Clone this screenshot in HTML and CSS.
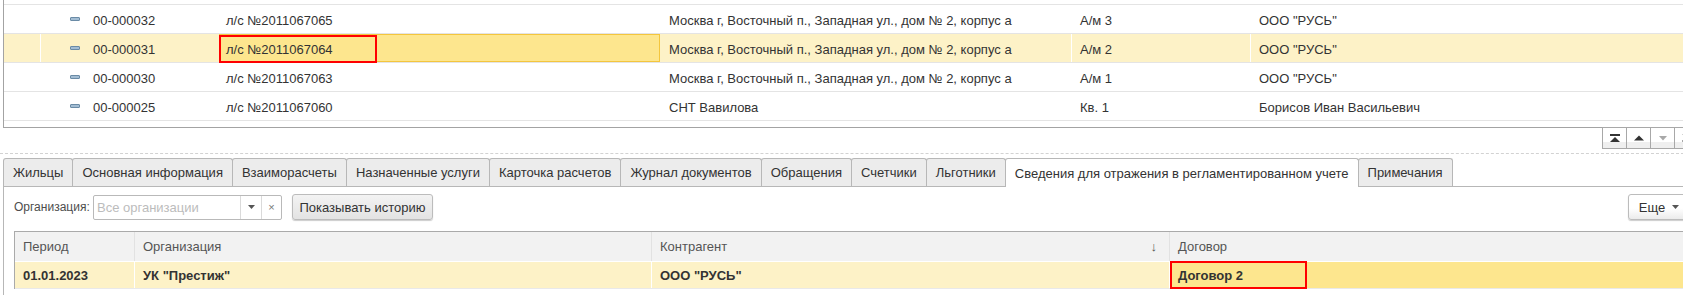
FILE: index.html
```html
<!DOCTYPE html>
<html lang="ru">
<head>
  <meta charset="UTF-8" />
  <title>Лицевые счета</title>
  <link rel="stylesheet" href="styles.css">
</head>
<body>
<div class="page">

  <!-- Список лицевых счетов -->
  <div class="list">
    <div class="rows">
      <div class="row">
        <div class="cell c-mark"></div>
        <div class="cell c-code"><span class="ico"></span>00-000032</div>
        <div class="cell c-acc">л/с №2011067065</div>
        <div class="cell c-addr">Москва г, Восточный п., Западная ул., дом № 2, корпус а</div>
        <div class="cell c-room">А/м 3</div>
        <div class="cell c-owner">ООО "РУСЬ"</div>
      </div>
      <div class="row current">
        <div class="cell c-mark"></div>
        <div class="cell c-code"><span class="ico"></span>00-000031</div>
        <div class="cell c-acc active"><span class="redbox acc-box"></span>л/с №2011067064</div>
        <div class="cell c-addr">Москва г, Восточный п., Западная ул., дом № 2, корпус а</div>
        <div class="cell c-room">А/м 2</div>
        <div class="cell c-owner">ООО "РУСЬ"</div>
      </div>
      <div class="row">
        <div class="cell c-mark"></div>
        <div class="cell c-code"><span class="ico"></span>00-000030</div>
        <div class="cell c-acc">л/с №2011067063</div>
        <div class="cell c-addr">Москва г, Восточный п., Западная ул., дом № 2, корпус а</div>
        <div class="cell c-room">А/м 1</div>
        <div class="cell c-owner">ООО "РУСЬ"</div>
      </div>
      <div class="row">
        <div class="cell c-mark"></div>
        <div class="cell c-code"><span class="ico"></span>00-000025</div>
        <div class="cell c-acc">л/с №2011067060</div>
        <div class="cell c-addr">СНТ Вавилова</div>
        <div class="cell c-room">Кв. 1</div>
        <div class="cell c-owner">Борисов Иван Васильевич</div>
      </div>
    </div>
  </div>

  <!-- Кнопки прокрутки -->
  <div class="scroller">
    <div class="sbtn"><svg width="10" height="8" viewBox="0 0 10 8"><rect x="0" y="0" width="10" height="2" fill="#333"/><path d="M0 8 L5 3 L10 8 Z" fill="#333"/></svg></div>
    <div class="sbtn"><svg width="10" height="6" viewBox="0 0 10 6"><path d="M0 5.5 L5 0.5 L10 5.5 Z" fill="#333"/></svg></div>
    <div class="sbtn"><svg width="8" height="5" viewBox="0 0 8 5"><path d="M0 0 L4 4.5 L8 0 Z" fill="#a8a8a8"/></svg></div>
    <div class="sbtn"><svg width="10" height="8" viewBox="0 0 10 8"><path d="M0 0 L5 5 L10 0 Z" fill="#a8a8a8"/><rect x="0" y="6" width="10" height="2" fill="#a8a8a8"/></svg></div>
  </div>

  <div class="splitter"></div>

  <!-- Закладки -->
  <div class="tabs">
    <div class="tab">Жильцы</div>
    <div class="tab">Основная информация</div>
    <div class="tab">Взаиморасчеты</div>
    <div class="tab">Назначенные услуги</div>
    <div class="tab">Карточка расчетов</div>
    <div class="tab">Журнал документов</div>
    <div class="tab">Обращения</div>
    <div class="tab">Счетчики</div>
    <div class="tab">Льготники</div>
    <div class="tab on">Сведения для отражения в регламентированном учете</div>
    <div class="tab">Примечания</div>
  </div>

  <div class="panel">
    <div class="filter">
      <div class="lbl">Организация:</div>
      <div class="combo">
        <div class="combo-text">Все организации</div>
        <div class="combo-btn"><svg width="7" height="4" viewBox="0 0 7 4"><path d="M0 0 L3.5 4 L7 0 Z" fill="#555"/></svg></div>
        <div class="combo-btn clear">×</div>
      </div>
      <div class="btn hist">Показывать историю</div>
      <div class="btn more">Еще <svg width="7" height="4" viewBox="0 0 7 4"><path d="M0 0 L3.5 4 L7 0 Z" fill="#555"/></svg></div>
    </div>

    <div class="grid">
      <div class="thead">
        <div class="th">Период</div>
        <div class="th">Организация</div>
        <div class="th sorted">Контрагент <span class="arrow">↓</span></div>
        <div class="th last">Договор</div>
      </div>
      <div class="tr">
        <div class="td">01.01.2023</div>
        <div class="td">УК "Престиж"</div>
        <div class="td">ООО "РУСЬ"</div>
        <div class="td last cur"><span class="redbox dog-box"></span>Договор 2</div>
      </div>
    </div>
  </div>

</div>
</body>
</html>
```

FILE: styles.css
```css
html,
body {
  margin: 0;
  overflow: hidden;
  background: #fff;
}

body {
  font-family: 'Liberation Sans', Arial, sans-serif;
  font-size: 13px;
  color: #333;
}

.page {
  width: 1699px;
  padding-left: 3px;
  box-sizing: border-box;
}

/* Верхний список */
.list {
  border-left: 1px solid #a3a3a3;
  border-right: 1px solid #a3a3a3;
  border-bottom: 1px solid #a3a3a3;
  padding: 4px 0 6px;
}

.rows {
  border-bottom: 1px solid #e4e4e4;
}

.row {
  display: grid;
  grid-template-columns: 37px 178px 441px 412px 179px 1fr;
  height: 29px;
  box-sizing: border-box;
  border-top: 1px solid #e4e4e4;
}

.cell {
  position: relative;
  display: flex;
  align-items: center;
  padding-top: 2px;
  padding-left: 8px;
  white-space: nowrap;
  box-sizing: border-box;
  border-right: 1px solid transparent;
}

.c-code {
  padding-left: 29px;
  border-right: none;
}

.c-acc {
  padding-left: 6px;
  border: 1px solid transparent;
}

.c-addr {
  padding-left: 9px;
}

.ico {
  width: 10px;
  height: 4px;
  margin-right: 13px;
  margin-top: -3px;
  box-sizing: border-box;
  background: #a3bdd3;
  border: 1px solid #6a8ba6;
  border-radius: 1px;
}

.row.current {
  background: #fdf2c7;
}

.row.current .cell {
  border-right-color: #fff;
}

.row.current .c-acc.active {
  background: #fde68e;
  border-color: #f4c63d;
}

.redbox {
  position: absolute;
  z-index: 2;
  border: 2px solid #f00;
  box-sizing: border-box;
}

.acc-box {
  left: -1px;
  top: 0;
  width: 158px;
  height: 28px;
}

/* Кнопки прокрутки */
.scroller {
  display: flex;
  justify-content: flex-end;
  margin-top: -1px;
}

.sbtn {
  width: 25px;
  height: 22px;
  margin-left: -1px;
  box-sizing: border-box;
  border: 1px solid #a8a8a8;
  background: linear-gradient(#fff 0, #fff 14px, #efefef 14px);
  display: flex;
  align-items: center;
  justify-content: center;
}

.splitter {
  margin: 4px 0 0 -3px;
  border-top: 1px dashed #d2d2d2;
}

/* Закладки */
.tabs {
  display: flex;
  align-items: flex-end;
  height: 28px;
  margin-top: 4px;
  position: relative;
  z-index: 1;
}

.tab {
  height: 28px;
  box-sizing: border-box;
  padding: 0 9px;
  margin-right: -1px;
  display: flex;
  align-items: center;
  white-space: nowrap;
  background: #ececec;
  border: 1px solid #b7b7b7;
  border-bottom: none;
  border-radius: 3px 3px 0 0;
}

.tab.on {
  height: 29px;
  margin-bottom: -1px;
  background: #fff;
}

.panel {
  border-left: 1px solid #b7b7b7;
  border-top: 1px solid #b7b7b7;
  border-right: 1px solid #b7b7b7;
  padding: 7px 8px 8px 10px;
}

.filter {
  display: flex;
  align-items: center;
  height: 26px;
  margin-bottom: 11px;
}

.lbl {
  width: 79px;
  font-size: 12px;
  white-space: nowrap;
  color: #4d4d4d;
}

.combo {
  display: flex;
  width: 189px;
  height: 25px;
  box-sizing: border-box;
  border: 1px solid #b9b9b9;
  border-radius: 2px;
}

.combo-text {
  flex: 1;
  display: flex;
  align-items: center;
  padding-left: 3px;
  color: #bcbcbc;
}

.combo-btn {
  width: 20px;
  border-left: 1px solid #dadada;
  display: flex;
  align-items: center;
  justify-content: center;
}

.combo-btn.clear {
  width: 19px;
  font-size: 11px;
  color: #777;
}

.btn {
  height: 26px;
  box-sizing: border-box;
  display: flex;
  align-items: center;
  justify-content: center;
  border: 1px solid #bcbcbc;
  border-radius: 3px;
  box-shadow: 0 1px 1px rgba(0, 0, 0, 0.2);
}

.hist {
  width: 141px;
  margin-left: 10px;
  background: linear-gradient(#f3f3f3, #e3e3e3);
}

.more {
  width: 62px;
  margin-left: auto;
  gap: 7px;
  background: linear-gradient(#fff 55%, #ebebeb);
}

/* Нижняя таблица */
.grid {
  border-left: 1px solid #aaa;
  border-top: 1px solid #aaa;
  min-height: 40px;
}

.thead,
.tr {
  display: grid;
  grid-template-columns: 120px 517px 518px 1fr;
  box-sizing: border-box;
}

.thead {
  height: 30px;
  background: #f2f2f2;
  border-bottom: 1px solid #fff;
}

.th {
  display: flex;
  align-items: center;
  padding-left: 8px;
  color: #555;
  border-right: 1px solid #e2e2e2;
}

.th.sorted {
  justify-content: space-between;
  padding-right: 12px;
}

.th.last,
.td.last {
  border-right: none;
}

.arrow {
  color: #555;
}

.tr {
  height: 27px;
  background: #fdf2c7;
  border-bottom: 1px solid #e9e9e9;
  font-weight: bold;
}

.td {
  position: relative;
  display: flex;
  align-items: center;
  padding-left: 8px;
  white-space: nowrap;
  border-right: 1px solid #fff;
}

.td.cur {
  background: #fde68e;
}

.dog-box {
  left: 0;
  top: -1px;
  width: 137px;
  height: 28px;
}
```
